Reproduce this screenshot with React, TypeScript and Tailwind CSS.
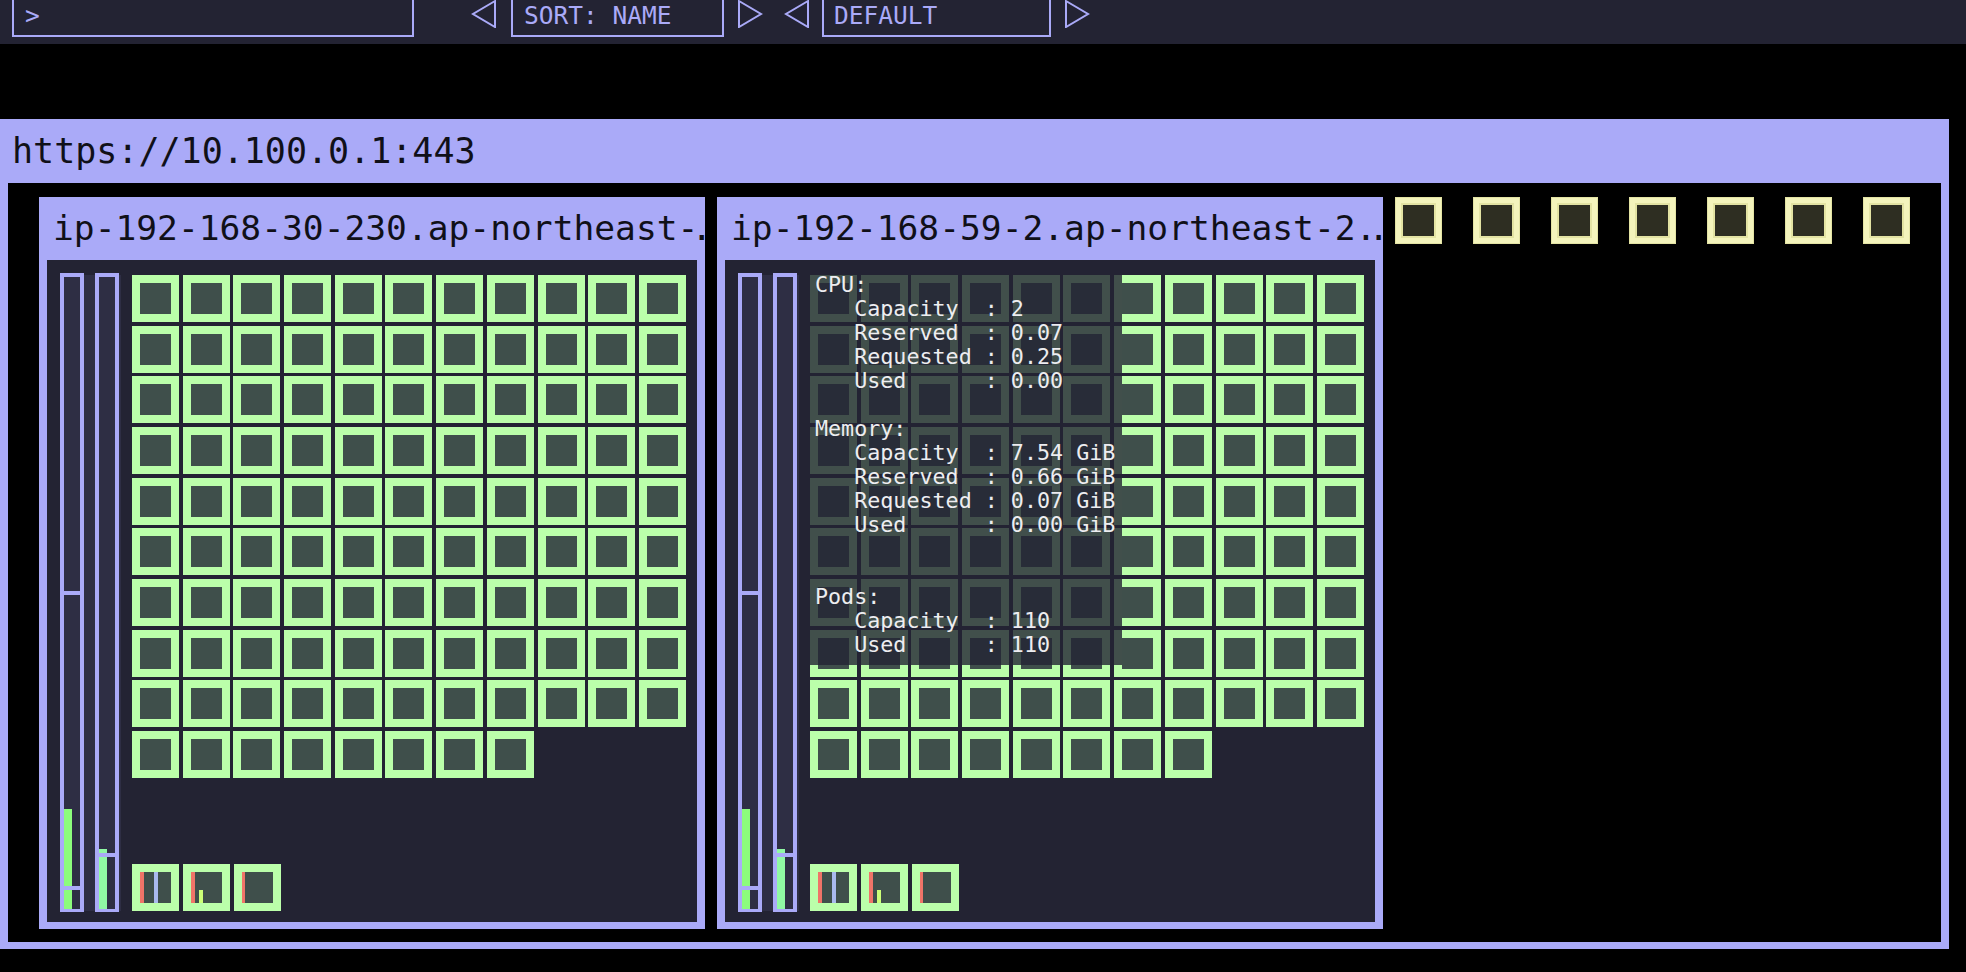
const podCount = 107;

const tooltipLines = [
  "CPU:",
  "   Capacity  : 2",
  "   Reserved  : 0.07",
  "   Requested : 0.25",
  "   Used      : 0.00",
  "",
  "Memory:",
  "   Capacity  : 7.54 GiB",
  "   Reserved  : 0.66 GiB",
  "   Requested : 0.07 GiB",
  "   Used      : 0.00 GiB",
  "",
  "",
  "Pods:",
  "   Capacity  : 110",
  "   Used      : 110",
];

function Triangle({ dir }: { dir: "left" | "right" }) {
  const points = dir === "left" ? "24,1 2,14 24,27" : "2,1 24,14 2,27";
  return (
    <svg width="26" height="28" viewBox="0 0 26 28" className="shrink-0">
      <polygon points={points} fill="none" stroke="#aaaaf8" strokeWidth="2" />
    </svg>
  );
}

function Pod() {
  return <div className="h-[47px] w-[47px] border-8 border-[#bbffaa] bg-[#3f4f4b]" />;
}

function PendingPod() {
  return (
    <div className="h-[47px] w-[47px] shrink-0 border border-[#e3e3a3] bg-[#f4f4bc] p-[5px]">
      <div className="h-full w-full border-2 border-[#e3e3a3] bg-[#2e2e22]" />
    </div>
  );
}

function Bars() {
  return (
    <div className="flex h-[639px] w-[61px] shrink-0">
      <div className="relative h-full w-[24px] border-x-4 border-t-4 border-b-[3px] border-[#aaaaf8] bg-[#2e2e44]">
        <div className="absolute bottom-0 left-0 h-[100px] w-[8px] bg-[#8cfc7c]" />
        <div className="absolute left-0 right-0 top-[314px] h-[4px] bg-[#aaaaf8]" />
        <div className="absolute left-0 right-0 top-[609px] h-[4px] bg-[#aaaaf8]" />
      </div>
      <div className="mb-[1px] mt-[2px] w-[11px] bg-[#2e2e44]" />
      <div className="relative h-full w-[24px] border-x-4 border-t-4 border-b-[3px] border-[#aaaaf8] bg-[#2e2e44]">
        <div className="absolute bottom-0 left-0 h-[60px] w-[8px] bg-[#90f9a4]" />
        <div className="absolute left-0 right-0 top-[576px] h-[4px] bg-[#aaaaf8]" />
      </div>
      <div className="mb-[1px] mt-[2px] w-[2px] bg-[#2e2e44]" />
    </div>
  );
}

function DaemonPods() {
  return (
    <div className="flex gap-[4px]">
      <div className="flex h-[47px] w-[47px] border-8 border-[#bbffaa] bg-[#3f4f4b]">
        <div className="h-full w-[4px] bg-[#f07468]" />
        <div className="ml-[10px] h-full w-[4px] bg-[#a9b9ee]" />
      </div>
      <div className="flex h-[47px] w-[47px] items-end border-8 border-[#bbffaa] bg-[#3f4f4b]">
        <div className="h-full w-[4px] bg-[#f07468]" />
        <div className="ml-[4px] h-[13px] w-[4px] bg-[#ccff77]" />
      </div>
      <div className="flex h-[47px] w-[47px] border-8 border-[#bbffaa] bg-[#3f4f4b]">
        <div className="h-full w-[3px] bg-[#f07468]" />
      </div>
    </div>
  );
}

function Node({ name, tooltip }: { name: React.ReactNode; tooltip?: boolean }) {
  return (
    <div className="flex h-[732px] w-[666px] shrink-0 flex-col bg-[#aaaaf8]">
      <div className="h-[63px] overflow-hidden whitespace-nowrap pl-[14px] text-[34.6px] leading-[63px] text-[#101018]">
        {name}
      </div>
      <div className="mx-[8px] flex h-[662px] bg-[#232333] pl-[13px] pt-[13px]">
        <Bars />
        <div className="relative ml-[11px] mt-[2px] flex h-[636px] flex-col justify-between">
          <div className="grid grid-cols-[repeat(11,47px)] gap-x-[3.7px] gap-y-[3.67px]">
            {Array.from({ length: podCount }).map((_, i) => (
              <Pod key={i} />
            ))}
          </div>
          <DaemonPods />
          {tooltip && (
            <div className="absolute left-0 top-[-2px] h-[392px] w-[312px] whitespace-pre bg-[rgba(35,35,51,0.8)] pl-[5px] text-[21.7px] leading-[24px] text-[#ededf0]">
              {tooltipLines.join("\n")}
            </div>
          )}
        </div>
      </div>
    </div>
  );
}

export default function App() {
  return (
    <div className="h-[972px] w-[1966px] overflow-hidden bg-black font-['DejaVu_Sans_Mono',monospace]">
      <header className="flex h-[44px] items-start bg-[#232333] text-[24.5px] leading-[31px] text-[#aaaaf8]">
        <div className="ml-[12px] h-[37px] w-[402px] border-x-2 border-b-2 border-[#aaaaf8] pl-[11px]">&gt;</div>
        <div className="ml-[57px]">
          <Triangle dir="left" />
        </div>
        <div className="ml-[14px] h-[37px] w-[213px] border-x-2 border-b-2 border-[#aaaaf8] pl-[11px]">SORT: NAME</div>
        <div className="ml-[13px]">
          <Triangle dir="right" />
        </div>
        <div className="ml-[21px]">
          <Triangle dir="left" />
        </div>
        <div className="ml-[12px] h-[37px] w-[229px] border-x-2 border-b-2 border-[#aaaaf8] pl-[10px]">DEFAULT</div>
        <div className="ml-[13px]">
          <Triangle dir="right" />
        </div>
      </header>

      <section className="mt-[75px] flex h-[830px] w-[1949px] flex-col bg-[#aaaaf8]">
        <div className="h-[64px] whitespace-nowrap pl-[12px] text-[35px] leading-[64px] text-[#101018]">
          https://10.100.0.1:443
        </div>
        <div className="mx-[8px] flex h-[759px] items-start gap-[12px] bg-black pl-[31px] pt-[14px]">
          <Node name="ip-192-168-30-230.ap-northeast-…" />
          <Node
            name={
              <>
                ip-192-168-59-2.ap-northeast-2<span className="tracking-[-8px]">...</span>
              </>
            }
            tooltip
          />
          <div className="flex gap-[31px]">
            {Array.from({ length: 7 }).map((_, i) => (
              <PendingPod key={i} />
            ))}
          </div>
        </div>
      </section>
    </div>
  );
}
